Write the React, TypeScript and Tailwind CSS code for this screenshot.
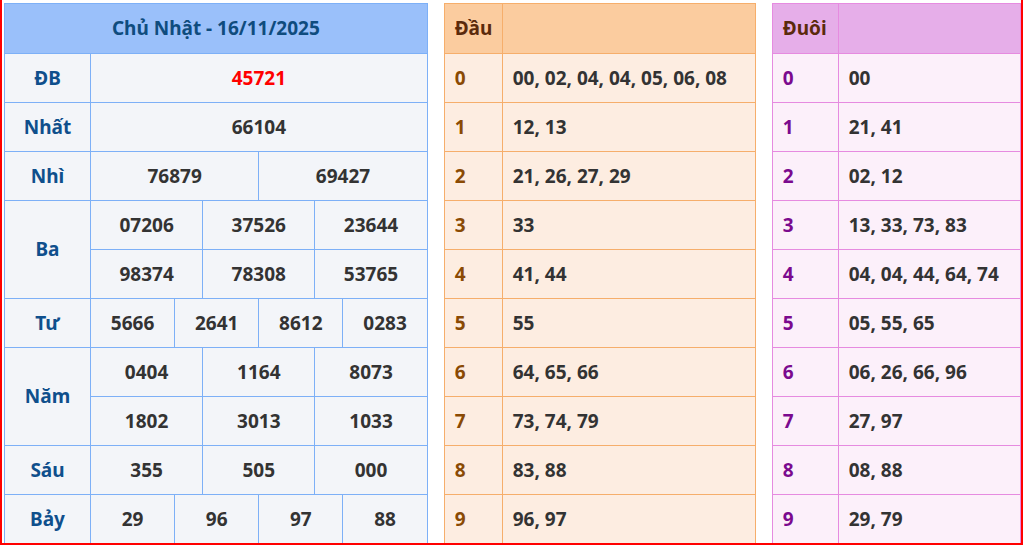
const cellB = 'border border-[#7db0f7] h-[49px] text-center';
const lab = cellB + ' text-[#0f4f8c] w-[86px]';

function Left() {
  const row = (label: string, vals: string[][]) => null;
  return (
    <table className="border-collapse w-[425px] bg-[#f3f5f9] text-[#333] table-fixed">
      <colgroup>
        <col className="w-[86px]" />
        {Array.from({ length: 12 }).map((_, i) => <col key={i} />)}
      </colgroup>
      <thead>
        <tr>
          <th colSpan={13} className="border border-[#7db0f7] h-[50px] bg-[#9ac0fa] text-[#0f4c7e]">Chủ Nhật - 16/11/2025</th>
        </tr>
      </thead>
      <tbody>
        <tr><td className={lab}>ĐB</td><td colSpan={12} className={cellB + ' text-[#ff0000]'}>45721</td></tr>
        <tr><td className={lab}>Nhất</td><td colSpan={12} className={cellB}>66104</td></tr>
        <tr><td className={lab}>Nhì</td><td colSpan={6} className={cellB}>76879</td><td colSpan={6} className={cellB}>69427</td></tr>
        <tr><td rowSpan={2} className={lab}>Ba</td>{['07206','37526','23644'].map(v=><td key={v} colSpan={4} className={cellB}>{v}</td>)}</tr>
        <tr>{['98374','78308','53765'].map(v=><td key={v} colSpan={4} className={cellB}>{v}</td>)}</tr>
        <tr><td className={lab}>Tư</td>{['5666','2641','8612','0283'].map(v=><td key={v} colSpan={3} className={cellB}>{v}</td>)}</tr>
        <tr><td rowSpan={2} className={lab}>Năm</td>{['0404','1164','8073'].map(v=><td key={v} colSpan={4} className={cellB}>{v}</td>)}</tr>
        <tr>{['1802','3013','1033'].map(v=><td key={v} colSpan={4} className={cellB}>{v}</td>)}</tr>
        <tr><td className={lab}>Sáu</td>{['355','505','000'].map(v=><td key={v} colSpan={4} className={cellB}>{v}</td>)}</tr>
        <tr><td className={lab}>Bảy</td>{['29','96','97','88'].map(v=><td key={v} colSpan={3} className={cellB}>{v}</td>)}</tr>
      </tbody>
    </table>
  );
}

function Side({ title, rows, w, first, border, head, body, digit }: { title: string; rows: string[]; w: string; first: string; border: string; head: string; body: string; digit: string }) {
  return (
    <table className={`border-collapse table-fixed ${w} ${body} text-[#333]`}>
      <colgroup><col className={first} /><col /></colgroup>
      <thead>
        <tr className={head}>
          <th className={`border ${border} h-[50px] text-left pl-[10px] text-[#5b2a0c]`}>{title}</th>
          <th className={`border ${border}`}></th>
        </tr>
      </thead>
      <tbody>
        {rows.map((r, i) => (
          <tr key={i}>
            <td className={`border ${border} h-[49px] pl-[10px] ${digit}`}>{i}</td>
            <td className={`border ${border} pl-[10px] whitespace-nowrap`}>{r}</td>
          </tr>
        ))}
      </tbody>
    </table>
  );
}

export default function App() {
  return (
    <div className="w-[1023px] h-[545px] border-2 border-[#ff0000] border-t-0 box-border bg-white overflow-hidden font-['Liberation_Sans',Arial,sans-serif] font-bold text-[19px] flex items-start gap-[16px] pl-[2px] pt-[3px]">
      <Left />
      <Side title="Đầu" w="w-[313px]" first="w-[58px]" border="border-[#f6ae6b]" head="bg-[#fbcc9f]" body="bg-[#fdede1]" digit="text-[#8a4a04]"
        rows={['00, 02, 04, 04, 05, 06, 08','12, 13','21, 26, 27, 29','33','41, 44','55','64, 65, 66','73, 74, 79','83, 88','96, 97']} />
      <Side title="Đuôi" w="w-[250px]" first="w-[66px]" border="border-[#e68be0]" head="bg-[#e6aee9]" body="bg-[#fcf0fa]" digit="text-[#7b0a8e]"
        rows={['00','21, 41','02, 12','13, 33, 73, 83','04, 04, 44, 64, 74','05, 55, 65','06, 26, 66, 96','27, 97','08, 88','29, 79']} />
    </div>
  );
}
